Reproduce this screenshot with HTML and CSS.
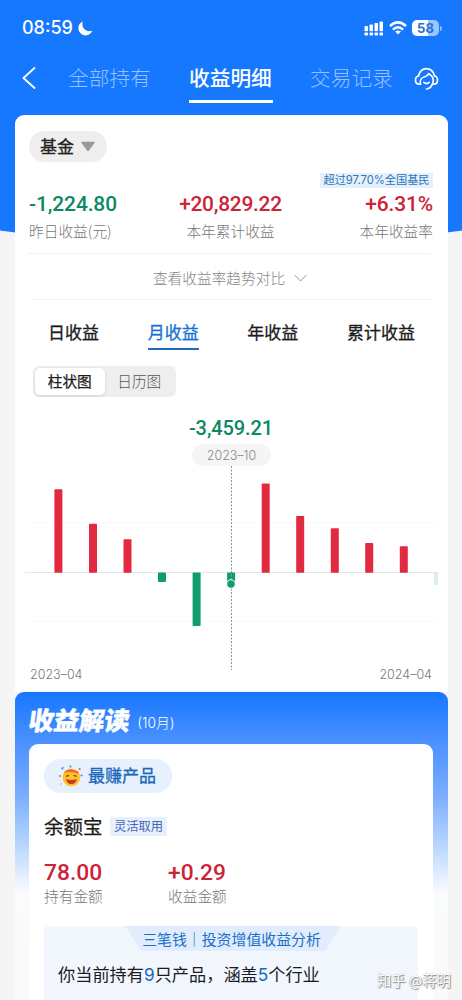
FILE: index.html
```html
<!DOCTYPE html>
<html lang="zh-CN">
<head>
<meta charset="utf-8">
<title>收益明细</title>
<link rel="stylesheet" href="styles.css">
</head>
<body>
<div class="screen">
  <header class="status">
    <span class="time">08:59</span>
    <svg class="moon" width="15" height="15" viewBox="0 0 15 15"><path d="M4.800.5C1.800 1.800.2 4.500.4 7.600.7 11.500 3.800 14.400 7.600 14.400 10.600 14.400 13.200 12.600 14.300 9.800 10.500 10.800 6.900 9.700 5.300 6.700 4.200 4.700 4.100 2.500 4.800.5Z" fill="#fff"/></svg>
    <div class="status-icons">
      <svg width="20" height="15" viewBox="0 0 20 15" fill="#fff">
        <rect x="0.500" y="5" width="3.500" height="5.200" rx=".7"/><rect x="5.500" y="3.500" width="3.500" height="6.700" rx=".7"/><rect x="10.500" y="2" width="3.500" height="8.200" rx=".7"/><rect x="15.500" y="0.500" width="3.500" height="9.700" rx=".7"/>
        <rect x="0.500" y="11.500" width="3.500" height="3" rx=".7"/><rect x="5.500" y="11.500" width="3.500" height="3" rx=".7"/><rect x="10.500" y="11.500" width="3.500" height="3" rx=".7"/><rect x="15.500" y="11.500" width="3.500" height="3" rx=".7"/>
      </svg>
      <svg class="wifi" width="18" height="14" viewBox="0 0 18 14" fill="none" stroke="#fff" stroke-width="2.500"><path d="M1 5.200Q9-2.400 17 5.200M3.900 8.600Q9 4 14.100 8.600"/><path d="M9 13.600 6 10.600Q9 8.200 12 10.600Z" fill="#fff" stroke="none"/></svg>
      <span class="battery">58</span><i class="battery-cap"></i>
    </div>
  </header>
  <nav class="nav">
    <svg class="back" width="14" height="22" viewBox="0 0 14 22" fill="none" stroke="#fff" stroke-width="1.800" stroke-linecap="round" stroke-linejoin="round"><path d="M12.500 1 1.500 11 12.500 21"/></svg>
    <a class="nav-tab">全部持有</a>
    <a class="nav-tab active">收益明细</a>
    <a class="nav-tab last">交易记录</a>
    <svg class="service" width="25" height="24" viewBox="0 0 24 24" fill="none" stroke="#fff" stroke-width="1.700" stroke-linecap="round" stroke-linejoin="round"><path d="M4 8.500C5.500 4 8.300 1.700 12 1.700S18.500 4 20 8.500"/><path d="M6.100 17.200H4.500C2.300 17.200 1 15.600 1 13.300S2.200 9.200 4.100 9M19.900 9C21.800 9.200 23 11 23 13.300S21.700 17.200 19.500 17.200"/><path d="M5.900 16.500C5 11.500 7.500 10.500 10.300 9.700 12 9.200 13.200 8.300 14.300 6.700 17.900 8.700 19.300 12.200 18.500 15.500 17.700 19 15.500 21.300 12 22"/><path d="M9.400 15.300Q12 17.700 14.700 15.300"/></svg>
  </nav>

  <main>
    <section class="card">
      <button class="picker">基金<svg width="16" height="11" viewBox="0 0 16 11"><path d="M2 .7H14Q15.500.7 14.500 2L9 9.500Q8 10.700 7 9.500L1.500 2Q.5.7 2 .7Z" fill="#999"/></svg></button>
      <div class="tag-row"><span class="rank">超过97.70%全国基民</span></div>
      <div class="stats">
        <div class="stat"><b class="num green">-1,224.80</b><span>昨日收益(元)</span></div>
        <div class="stat mid"><b class="num red">+20,829.22</b><span>本年累计收益</span></div>
        <div class="stat right"><b class="num red">+6.31%</b><span>本年收益率</span></div>
      </div>
      <div class="trend">查看收益率趋势对比<svg width="13" height="8" viewBox="0 0 13 8" fill="none" stroke="#999" stroke-width="1"><path d="M.7 1 6.500 7 12.300 1"/></svg></div>
      <div class="tabs"><a>日收益</a><a class="on">月收益</a><a>年收益</a><a>累计收益</a></div>
      <div class="segment"><span class="seg on">柱状图</span><span class="seg">日历图</span></div>
      <div class="peak green">-3,459.21</div>
      <div class="month">2023–10</div>
      <svg class="chart" width="433" height="204" viewBox="15 466 433 204">
        <path d="M30 522.500H438M30 621.500H438" stroke="#fafafa"/>
        <path d="M25 572.500H438" stroke="#e3e6e5"/>
        <g fill="#e12a3f">
          <rect x="54.400" y="489.300" width="8" height="83.400" rx=".8"/><rect x="89" y="523.700" width="8" height="49" rx=".8"/><rect x="123.500" y="539.200" width="8" height="33.500" rx=".8"/>
          <rect x="261.700" y="483.400" width="8" height="89.300" rx=".8"/><rect x="296.200" y="516" width="8" height="56.700" rx=".8"/><rect x="330.800" y="528.300" width="8" height="44.400" rx=".8"/><rect x="365.200" y="543" width="8" height="29.700" rx=".8"/><rect x="399.800" y="546.300" width="8" height="26.400" rx=".8"/>
        </g>
        <g fill="#109c70"><rect x="158" y="572.500" width="8" height="9.500" rx=".8"/><rect x="192.600" y="572.500" width="8" height="53.600" rx=".8"/><rect x="227.100" y="572.500" width="8" height="9.500" rx=".8"/></g>
        <rect x="434" y="572.500" width="4" height="12.500" fill="#dcefe9"/>
        <path d="M231.500 466V670" stroke="#7c9c93" stroke-dasharray="2 1.500"/>
        <circle cx="231" cy="584" r="4.300" fill="#109c70" stroke="#fff" stroke-width="1"/>
      </svg>
      <div class="axis"><span>2023–04</span><span>2024–04</span></div>
    </section>

    <section class="insight">
      <h2><span class="insight-title">收益解读</span><small>(10月)</small></h2>
      <div class="product">
        <div class="best">
          <svg width="26" height="24" viewBox="0 0 26 24"><circle cx="13.300" cy="13.500" r="8.800" fill="#ffc02b"/><path d="M5.800 9Q9 4.500 14 5.400L20 7.300 21 9.800Q13 6.500 5.800 9Z" fill="#ef6a29"/><path d="M8 12.300 11 11.300M15.500 11.300 18.700 12.300" stroke="#8d4517" stroke-width="1.300"/><path d="M8 15Q13.300 17 18.700 15 18.200 20 13.300 20 8.800 20 8 15Z" fill="#c83a20"/><path d="M3 4.200 5.500 2.500 5 6Z" fill="#427fe7"/><path d="M11.500 1 14 2.500 12 4Z" fill="#30b969"/><circle cx="21.700" cy="5" r="1" fill="#ef622d"/><circle cx="2" cy="12" r="1" fill="#ef622d"/><circle cx="23.500" cy="11.500" r="1" fill="#3b84ec"/><circle cx="3" cy="20" r=".8" fill="#e8aa32"/></svg>
          <span>最赚产品</span>
        </div>
        <div class="name-row"><strong>余额宝</strong><em>灵活取用</em></div>
        <div class="holdings">
          <div class="holding"><b class="red">78.00</b><span>持有金额</span></div>
          <div class="holding"><b class="red">+0.29</b><span>收益金额</span></div>
        </div>
        <div class="analysis">
          <div class="analysis-title">三笔钱｜投资增值收益分析</div>
          <p>你当前持有<i>9</i>只产品，涵盖<i>5</i>个行业</p>
        </div>
      </div>
    </section>
  </main>
  <div class="watermark">知乎 @蒋明</div>
</div>
</body>
</html>
```

FILE: styles.css
```css
* { box-sizing: border-box; }
body { margin: 0; background: #f5f5f5; font-family: "Noto Sans CJK SC", sans-serif; color: #1c1c1c; }
.screen { position: relative; width: 462px; height: 1000px; overflow: hidden; isolation: isolate; }
.screen::before { content: ""; position: absolute; z-index: -1; left: -40px; right: -40px; top: 0; height: 242px; background: #1677ff; border-radius: 0 0 50% 50% / 0 0 24px 24px; }
svg { display: block; flex: none; }

.status { height: 56px; display: flex; align-items: center; padding: 0 20px 0 22px; color: #fff; }
.time { font: 500 18px/20px Inter, sans-serif; width: 55px; white-space: nowrap; }
.moon { margin-left: 1px; }
.status-icons { margin-left: auto; display: flex; align-items: center; }
.wifi { margin: 0 5px 0 5px; }
.battery { width: 27px; height: 16px; border-radius: 5px; background: linear-gradient(90deg, #fff 58%, #9bc6ff 58%); color: #2a72cf; font: 700 13px/16px Inter, sans-serif; text-align: center; }
.battery-cap { width: 2px; height: 5px; margin-left: 1px; border-radius: 0 2px 2px 0; background: #8bbcff; }

.nav { height: 59px; padding: 0 23px 0 22px; display: flex; align-items: flex-start; color: #fff; }
.back { margin-top: 11px; }
.nav-tab { margin-top: 4px; margin-left: 32px; height: 43px; width: 83px; font-size: 20.700px; line-height: 34px; font-weight: 300; color: #94c3ff; white-space: nowrap; }
.nav-tab.active { margin-left: 38px; width: 84px; font-weight: 500; color: #fff; border-bottom: 3px solid #fff; }
.nav-tab.last { margin-left: 37px; }
.service { margin-left: auto; margin-top: 11px; }

main { padding: 0 14px 0 15px; }
.card { height: 577px; background: #fff; border-radius: 9px 9px 0 0; display: flex; flex-direction: column; padding-top: 16px; }
.picker { margin-left: 14px; width: 78px; height: 31px; border: 0; border-radius: 16px; background: #eee; display: flex; align-items: center; gap: 6px; padding: 0 11px 1px; font: 400 17px/30px "Noto Sans CJK SC", sans-serif; -webkit-text-stroke: .3px; color: #222; white-space: nowrap; }
.tag-row { display: flex; justify-content: flex-end; padding: 11px 15px 0; }
.rank { width: 113px; height: 15px; background: #e6f0fc; color: #2878b8; font: 11.200px/15px Inter, "Noto Sans CJK SC", sans-serif; text-align: center; white-space: nowrap; }
.green { color: #0d8961; }
.red { color: #cc2339; }
.stats { display: grid; grid-template-columns: 120px 163px 1fr; padding: 0 15px 0 14px; height: 66px; border-bottom: 1px solid; border-image: linear-gradient(90deg, transparent 14px, #f1f1f1 14px 414px, transparent 414px) 1; }
.stat { display: flex; flex-direction: column; align-items: flex-start; font-size: 14.700px; font-weight: 300; line-height: 22px; color: #777; white-space: nowrap; }
.stat.mid { align-items: center; }
.stat.right { align-items: flex-end; }
.num { font: 500 20.900px/33px Roboto, sans-serif; letter-spacing: -.1px; height: 32px; }
.stat.mid .num { letter-spacing: -.25px; }
.trend { height: 46px; margin: 0 17px 0 18px; padding: 2px 4px 0 0; border-bottom: 1px solid #f1f1f1; display: flex; align-items: center; justify-content: center; gap: 9px; font-size: 14.700px; font-weight: 300; color: #888; }
.tabs { height: 50px; display: flex; justify-content: space-between; padding: 15px 33px 0 33px; font-size: 17px; line-height: 33px; font-weight: 400; -webkit-text-stroke: .3px; }
.tabs a { height: 35px; white-space: nowrap; }
.tabs .on { color: #1672d4; border-bottom: 2px solid #1f6dbd; }
.segment { margin: 16px 0 0 18px; width: 143px; height: 31px; border-radius: 6px; background: #eee; padding: 2px; display: flex; }
.seg { width: 70px; height: 27px; text-align: center; line-height: 26px; font-size: 14.700px; font-weight: 300; color: #555; }
.seg.on { background: #fff; border-radius: 5px; box-shadow: 0 1px 3px #0002; font-weight: 400; -webkit-text-stroke: .25px; color: #1c1c1c; }
.peak { margin-top: 17px; height: 30px; font: 500 20px/28px Roboto, sans-serif; letter-spacing: -.1px; text-align: center; padding-right: 1px; }
.month { align-self: center; width: 79px; height: 22px; border-radius: 11px; background: #f5f5f5; color: #888; font: 300 12.500px/23px Inter, sans-serif; text-align: center; }
.axis { display: flex; justify-content: space-between; padding: 0 16px 0 15px; margin-top: -3px; font: 300 12.500px/16px Inter, sans-serif; color: #777; }

.insight { height: 308px; border-radius: 9px 9px 0 0; padding: 0 15px 0 14px; background: linear-gradient(#1677ff 0, #4d92ff 52px, #77abff 100px, #b4d3fd 150px, #e9f2ff 188px, #fafbfd 202px, #fafafc 308px); }
.insight h2 { margin: 0; height: 52px; display: flex; align-items: center; color: #fff; font-weight: 400; }
.insight-title { font-size: 25.300px; line-height: 52px; font-weight: 900; transform: skewX(-8deg); padding-top: 1px; -webkit-text-stroke: .4px; }
.insight small { font: 300 13.800px/20px Inter, "Noto Sans CJK SC", sans-serif; margin: 9px 0 0 7px; }
.product { height: 256px; background: #fff; border-radius: 9px 9px 0 0; padding: 15px 15px 0; }
.best { width: 128px; height: 34px; border-radius: 17px; background: #e7f1fd; color: #1768bb; display: flex; align-items: center; gap: 4px; padding-left: 14px; font-size: 17px; line-height: 30px; font-weight: 400; -webkit-text-stroke: .3px; white-space: nowrap; }
.best span { padding-bottom: 2px; }
.name-row { display: flex; align-items: center; height: 30px; margin-top: 18px; }
.name-row strong { font-size: 19.500px; font-weight: 400; -webkit-text-stroke: .25px; width: 66px; line-height: 28px; }
.name-row em { width: 57px; height: 19px; background: #e9effc; color: #4367b8; font: 400 12.300px/18px "Noto Sans CJK SC", sans-serif; text-align: center; }
.holdings { display: flex; height: 85px; padding-top: 15px; }
.holding { width: 124px; display: flex; flex-direction: column; font-size: 14.700px; line-height: 22px; font-weight: 300; color: #777; }
.holding b { font: 500 22.800px/33px Roboto, sans-serif; height: 29px; }
.analysis { height: 74px; background: #f2f7fe; border-radius: 5px 5px 0 0; }
.analysis-title { width: 216px; height: 25px; margin: 0 auto; position: relative; left: 2px; background: #e1edfd; clip-path: polygon(0 0, 100% 0, 200px 100%, 16px 100%); color: #1b6fc9; font-size: 14.900px; line-height: 25px; text-align: center; text-indent: -3px; white-space: nowrap; }
.analysis p { margin: 7px 0 0 14px; font-size: 17.200px; line-height: 32px; font-weight: 400; white-space: nowrap; }
.analysis i { font-family: Inter, sans-serif; font-style: normal; color: #1768c0; }
.watermark { position: absolute; left: 377px; top: 970px; font-size: 14.300px; line-height: 20px; color: #fff; text-shadow: 0 0 1px #888, 1px 1px 1px #888; white-space: nowrap; }
```
